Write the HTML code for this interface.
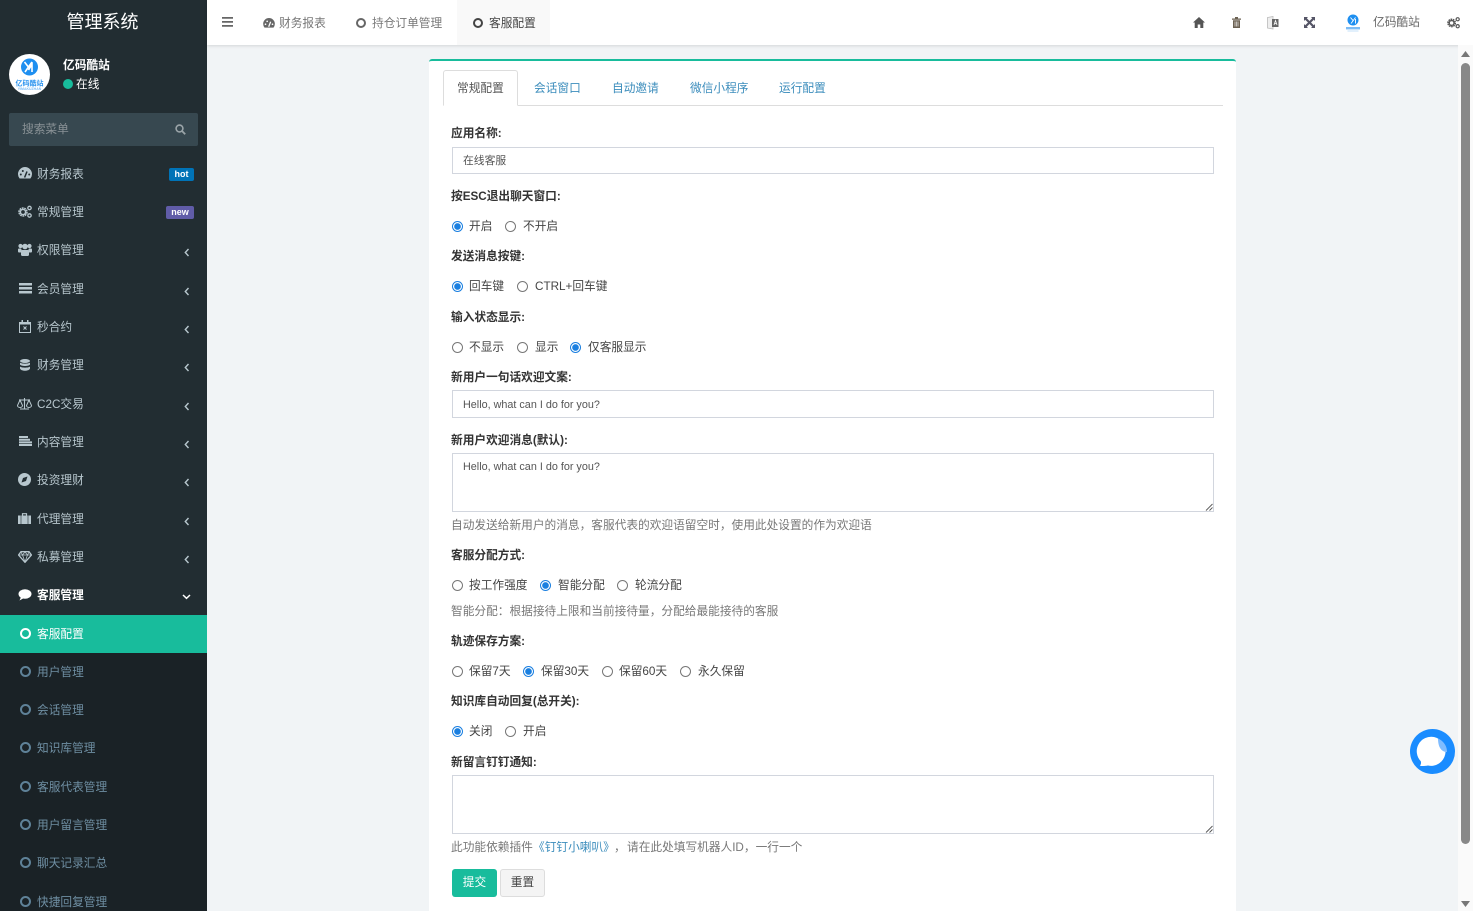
<!DOCTYPE html>
<html lang="zh"><head><meta charset="utf-8"><title>管理系统</title>
<style>
*{box-sizing:border-box}
html,body{margin:0;padding:0;width:1473px;height:911px;overflow:hidden;background:#f1f4f6}
body{position:relative;font-family:"Liberation Sans","Noto Sans CJK SC",sans-serif;font-size:11.7px;color:#444}
.a{position:absolute;white-space:nowrap}
.t{position:absolute;white-space:nowrap;line-height:16px;height:16px;margin-top:1px}
.m{color:#b8c7ce;left:37px}
.s{color:#6f8fa3;left:37px}
.b{font-weight:bold;color:#333;left:451px}
.h{color:#777;left:451px}
.r{position:absolute;width:11px;height:11px;margin-top:.5px;border-radius:50%;border:1px solid #777;background:#fff}
.r.on{border:1px solid #1a7fe0;background:radial-gradient(circle,#1a7fe0 0 3px,#fff 3.6px)}
.box{position:absolute;left:452px;width:762px;border:1px solid #d2d6de;background:#fff}
.in{font-size:10.8px;color:#555}
.ci{position:absolute;left:20px;width:11px;height:11px;border-radius:50%;border:2px solid #5f8298}
svg{position:absolute;display:block}
.chev{position:absolute;left:184px}
</style></head><body>

<!-- sidebar -->
<div class="a" style="left:0;top:0;width:207px;height:911px;background:#222d32"></div>
<div class="a" style="left:-1px;top:0;width:207px;height:45px;color:#fff;font-size:18px;line-height:44px;text-align:center">管理系统</div>

<svg style="left:9px;top:54px" width="41" height="41" viewBox="0 0 41 41"><circle cx="20.500" cy="20.500" r="20.500" fill="#fff"/><circle cx="20.500" cy="13" r="8.500" fill="#1e8ff0"/><path d="M15.500 8l3.500 4.500M23 8L16 18M23 18V10.500L19.500 16" stroke="#fff" stroke-width="1.600" fill="none"/><text x="20.500" y="31.500" text-anchor="middle" font-size="7" font-weight="bold" fill="#2a93ef" font-family="Noto Sans CJK SC,sans-serif">亿码酷站</text><text x="20.500" y="36" text-anchor="middle" font-size="3.500" font-weight="bold" fill="#7cbcf5" font-family="Liberation Sans,sans-serif">YIMAKUZHAN</text></svg>
<div class="t" style="left:63px;top:57px;color:#fff;font-weight:bold">亿码酷站</div>
<div class="a" style="left:63px;top:79px;width:10px;height:10px;border-radius:50%;background:#18bc9c"></div>
<div class="t" style="left:76px;top:76px;color:#fff">在线</div>

<div class="a" style="left:9px;top:113px;width:189px;height:33px;background:#374850;border-radius:2px"></div>
<div class="t" style="left:22px;top:121px;color:#8a9296">搜索菜单</div>
<svg style="left:175px;top:124px" width="11" height="11" viewBox="0 0 11 11"><circle cx="4.500" cy="4.500" r="3.400" fill="none" stroke="#9aa4a8" stroke-width="1.600"/><path d="M7 7l3.200 3.200" stroke="#9aa4a8" stroke-width="1.800"/></svg>

<!-- menu items -->
<svg style="left:18px;top:167px" width="14" height="12" viewBox="0 0 14 12"><path d="M1.600 11.500A7 7 0 1 1 12.400 11.500Z" fill="#b8c7ce"/><path d="M6.600 10.500L9 4.500" stroke="#222d32" stroke-width="1.500"/><circle cx="2.800" cy="7.500" r="1" fill="#222d32"/><circle cx="4.800" cy="4" r="1" fill="#222d32"/><circle cx="11.200" cy="7.500" r="1" fill="#222d32"/></svg>
<div class="t m" style="top:166px">财务报表</div>
<div class="a" style="left:169px;top:168px;width:25px;height:13px;background:#0073b7;border-radius:2px;color:#fff;font-weight:bold;font-size:9px;line-height:12px;text-align:center">hot</div>

<svg style="left:18px;top:205px" width="14" height="13" viewBox="0 0 14 13"><circle cx="5" cy="7" r="4" fill="none" stroke="#b8c7ce" stroke-width="1.500" stroke-dasharray="1.800 .7"/><circle cx="5" cy="7" r="2.600" fill="none" stroke="#b8c7ce" stroke-width="1.500"/><circle cx="11.500" cy="3" r="1.700" fill="none" stroke="#b8c7ce" stroke-width="1.300"/><circle cx="11.500" cy="10.500" r="1.700" fill="none" stroke="#b8c7ce" stroke-width="1.300"/></svg>
<div class="t m" style="top:204px">常规管理</div>
<div class="a" style="left:166px;top:206px;width:28px;height:13px;background:#605ca8;border-radius:2px;color:#fff;font-weight:bold;font-size:9px;line-height:12px;text-align:center">new</div>

<svg style="left:18px;top:243px" width="14" height="13" viewBox="0 0 14 13"><circle cx="7" cy="3.500" r="2.800" fill="#b8c7ce"/><circle cx="2.500" cy="3" r="2.100" fill="#b8c7ce"/><circle cx="11.500" cy="3" r="2.100" fill="#b8c7ce"/><rect x="0" y="5.500" width="3.500" height="4" rx="1" fill="#b8c7ce"/><rect x="10.500" y="5.500" width="3.500" height="4" rx="1" fill="#b8c7ce"/><rect x="3" y="7" width="8" height="6" rx="1.200" fill="#b8c7ce"/></svg>
<div class="t m" style="top:242px">权限管理</div>

<svg style="left:19px;top:283px" width="13" height="11" viewBox="0 0 13 11"><path d="M0 0h13v2.500H0zM0 4h13v2.500H0zM0 8h13v2.500H0z" fill="#b8c7ce"/></svg>
<div class="t m" style="top:281px">会员管理</div>

<svg style="left:19px;top:320px" width="12" height="13" viewBox="0 0 12 13"><path d="M.5 2.500h11v10H.5z" fill="none" stroke="#b8c7ce"/><path d="M0 2h12v2.500H0zM2.500 0h1.500v3H2.500zM8 0h1.500v3H8z" fill="#b8c7ce"/><path d="M4.500 6.500l3 3M7.500 6.500l-3 3" stroke="#b8c7ce"/></svg>
<div class="t m" style="top:319px">秒合约</div>

<svg style="left:20px;top:359px" width="10" height="12" viewBox="0 0 10 12"><ellipse cx="5" cy="2" rx="5" ry="2" fill="#b8c7ce"/><path d="M0 3.500c1 1.500 9 1.500 10 0v2c-1 2-9 2-10 0zM0 7.500c1 1.500 9 1.500 10 0v2c-1 3-9 3-10 0z" fill="#b8c7ce"/></svg>
<div class="t m" style="top:357px">财务管理</div>

<svg style="left:17px;top:398px" width="15" height="12" viewBox="0 0 15 12"><path d="M7.500 0v11M3 11h9M2 2h11" stroke="#b8c7ce" stroke-width="1.100" fill="none"/><path d="M.5 7.500L3 2l2.500 5.500a2.500 2 0 0 1-5 0zM9.500 7.500L12 2l2.500 5.500a2.500 2 0 0 1-5 0z" fill="none" stroke="#b8c7ce"/></svg>
<div class="t m" style="top:396px">C2C交易</div>

<svg style="left:19px;top:436px" width="13" height="10" viewBox="0 0 13 10"><path d="M0 0h9v2H0zM0 2.700h11v2H0zM0 5.400h13v2H0zM0 8h13v2H0z" fill="#b8c7ce"/></svg>
<div class="t m" style="top:434px">内容管理</div>

<svg style="left:18px;top:473px" width="13" height="13" viewBox="0 0 13 13"><circle cx="6.500" cy="6.500" r="6.500" fill="#b8c7ce"/><path d="M3.500 9.500l1.500-4.500 4.500-1.500-1.500 4.500z" fill="#222d32"/></svg>
<div class="t m" style="top:472px">投资理财</div>

<svg style="left:18px;top:513px" width="13" height="11" viewBox="0 0 13 11"><path d="M0 2.500h13V11H0z" fill="#b8c7ce"/><path d="M4.500 2.500V.7h4v1.800" fill="none" stroke="#b8c7ce" stroke-width="1.200"/><path d="M3 2.500V11M10 2.500V11" stroke="#222d32" stroke-width=".6"/></svg>
<div class="t m" style="top:511px">代理管理</div>

<svg style="left:18px;top:551px" width="14" height="12" viewBox="0 0 14 12"><path d="M3 .7h8L13.500 4 7 11.300.5 4z" fill="none" stroke="#b8c7ce" stroke-width="1.300"/><path d="M.5 4h13M4.500 4L7 11l2.500-7M3 1l1.500 3L7 1l2.500 3L11 1" fill="none" stroke="#b8c7ce" stroke-width=".8"/></svg>
<div class="t m" style="top:549px">私募管理</div>

<svg style="left:18px;top:589px" width="14" height="12" viewBox="0 0 14 12"><ellipse cx="7" cy="5" rx="6.500" ry="4.700" fill="#fff"/><path d="M3 8L1.500 11.500 6 9z" fill="#fff"/></svg>
<div class="t" style="left:37px;top:587px;color:#fff;font-weight:bold">客服管理</div>

<!-- chevrons -->
<svg class="chev" style="top:248px" width="6" height="9" viewBox="0 0 6 9"><path d="M4.500 1L1.300 4.500 4.500 8" fill="none" stroke="#b8c7ce" stroke-width="1.400"/></svg>
<svg class="chev" style="top:287px" width="6" height="9" viewBox="0 0 6 9"><path d="M4.500 1L1.300 4.500 4.500 8" fill="none" stroke="#b8c7ce" stroke-width="1.400"/></svg>
<svg class="chev" style="top:325px" width="6" height="9" viewBox="0 0 6 9"><path d="M4.500 1L1.300 4.500 4.500 8" fill="none" stroke="#b8c7ce" stroke-width="1.400"/></svg>
<svg class="chev" style="top:363px" width="6" height="9" viewBox="0 0 6 9"><path d="M4.500 1L1.300 4.500 4.500 8" fill="none" stroke="#b8c7ce" stroke-width="1.400"/></svg>
<svg class="chev" style="top:402px" width="6" height="9" viewBox="0 0 6 9"><path d="M4.500 1L1.300 4.500 4.500 8" fill="none" stroke="#b8c7ce" stroke-width="1.400"/></svg>
<svg class="chev" style="top:440px" width="6" height="9" viewBox="0 0 6 9"><path d="M4.500 1L1.300 4.500 4.500 8" fill="none" stroke="#b8c7ce" stroke-width="1.400"/></svg>
<svg class="chev" style="top:478px" width="6" height="9" viewBox="0 0 6 9"><path d="M4.500 1L1.300 4.500 4.500 8" fill="none" stroke="#b8c7ce" stroke-width="1.400"/></svg>
<svg class="chev" style="top:517px" width="6" height="9" viewBox="0 0 6 9"><path d="M4.500 1L1.300 4.500 4.500 8" fill="none" stroke="#b8c7ce" stroke-width="1.400"/></svg>
<svg class="chev" style="top:555px" width="6" height="9" viewBox="0 0 6 9"><path d="M4.500 1L1.300 4.500 4.500 8" fill="none" stroke="#b8c7ce" stroke-width="1.400"/></svg>
<svg style="left:182px;top:594px" width="9" height="6" viewBox="0 0 9 6"><path d="M1 1l3.500 3.300L8 1" fill="none" stroke="#fff" stroke-width="1.500"/></svg>

<!-- submenu -->
<div class="a" style="left:0;top:615px;width:207px;height:296px;background:#1a2226"></div>
<div class="a" style="left:0;top:615px;width:207px;height:38px;background:#18bc9c"></div>
<div class="ci" style="top:628px;border-color:#fff"></div><div class="t" style="left:37px;top:626px;color:#fff">客服配置</div>
<div class="ci" style="top:666px"></div><div class="t s" style="top:664px">用户管理</div>
<div class="ci" style="top:704px"></div><div class="t s" style="top:702px">会话管理</div>
<div class="ci" style="top:742px"></div><div class="t s" style="top:740px">知识库管理</div>
<div class="ci" style="top:781px"></div><div class="t s" style="top:779px">客服代表管理</div>
<div class="ci" style="top:819px"></div><div class="t s" style="top:817px">用户留言管理</div>
<div class="ci" style="top:857px"></div><div class="t s" style="top:855px">聊天记录汇总</div>
<div class="ci" style="top:896px"></div><div class="t s" style="top:894px">快捷回复管理</div>

<!-- header -->
<div class="a" style="left:207px;top:0;width:1266px;height:45px;background:#fff;box-shadow:0 1px 3px rgba(0,0,0,.12)"></div>
<div class="a" style="left:457px;top:0;width:93px;height:45px;background:#f9f9f9"></div>
<svg style="left:222px;top:17px" width="11" height="10" viewBox="0 0 11 10"><path d="M0 0h11v1.800H0zM0 4h11v1.800H0zM0 8h11v1.800H0z" fill="#666"/></svg>
<svg style="left:263px;top:18px" width="12" height="10" viewBox="0 0 14 12"><path d="M1.600 11.500A7 7 0 1 1 12.400 11.500Z" fill="#666"/><path d="M6.600 10.500L9 4.500" stroke="#fff" stroke-width="1.500"/><circle cx="2.800" cy="7.500" r="1" fill="#fff"/><circle cx="4.800" cy="4" r="1" fill="#fff"/><circle cx="11.200" cy="7.500" r="1" fill="#fff"/></svg>
<div class="t" style="left:279px;top:15px;color:#777">财务报表</div>
<div class="a" style="left:356px;top:18px;width:10px;height:10px;border-radius:50%;border:2px solid #666"></div>
<div class="t" style="left:372px;top:15px;color:#777">持仓订单管理</div>
<div class="a" style="left:473px;top:18px;width:10px;height:10px;border-radius:50%;border:2px solid #444"></div>
<div class="t" style="left:489px;top:15px;color:#444">客服配置</div>

<svg style="left:1193px;top:17px" width="12" height="11" viewBox="0 0 12 11"><path d="M6 0L0 5.500h1.700V11h3V7.500h2.600V11h3V5.500H12z" fill="#555"/></svg>
<svg style="left:1232px;top:17px" width="9" height="11" viewBox="0 0 9 11"><path d="M0 1.500h9v1.300H0zM3 0h3v1.500H3zM1 3.300h7V11H1z" fill="#6b6152"/><path d="M3 4.500v5M4.500 4.500v5M6 4.500v5" stroke="#fff" stroke-width=".6"/></svg>
<svg style="left:1267px;top:16px" width="12" height="14" viewBox="0 0 12 14"><path d="M.5 1.500L6 .5v12.500L.5 12z" fill="#eee" stroke="#bbb" stroke-width=".8"/><path d="M5 3h6.500v8H5z" fill="#666"/><path d="M7 9l1.500-4.500L10 9M7.500 7.500h2" stroke="#fff" stroke-width=".8" fill="none"/></svg>
<svg style="left:1304px;top:17px" width="11" height="11" viewBox="0 0 11 11"><path d="M0 0h4L2.800 1.200 5.500 4 8.200 1.200 7 0h4v4L9.800 2.800 7 5.500l2.800 2.700L11 7v4H7l1.200-1.200L5.500 7 2.800 9.800 4 11H0V7l1.200 1.200L4 5.500 1.200 2.800 0 4z" fill="#556"/></svg>
<svg style="left:1344px;top:14px" width="18" height="20" viewBox="0 0 18 20"><circle cx="9" cy="6" r="5.500" fill="#1e8ff0"/><path d="M6.500 3.500L9 6.500M11.500 3.500L7 9.500M11.500 9.500V5" stroke="#fff" stroke-width=".9" fill="none"/><rect x="2" y="13" width="14" height="2.400" fill="#7cbcf5"/><rect x="3.500" y="16.500" width="11" height="1" fill="#c4e1fa"/></svg>
<div class="t" style="left:1373px;top:14px;color:#666">亿码酷站</div>
<svg style="left:1447px;top:16px" width="13" height="13" viewBox="0 0 14 13"><circle cx="5" cy="7" r="4" fill="none" stroke="#555" stroke-width="1.500" stroke-dasharray="1.800 .7"/><circle cx="5" cy="7" r="2.600" fill="none" stroke="#555" stroke-width="1.500"/><circle cx="11.500" cy="3" r="1.700" fill="none" stroke="#555" stroke-width="1.300"/><circle cx="11.500" cy="10.500" r="1.700" fill="none" stroke="#555" stroke-width="1.300"/></svg>

<!-- panel -->
<div class="a" style="left:429px;top:59px;width:807px;height:852px;background:#fff;border-top:2px solid #18bc9c;border-radius:3px 3px 0 0"></div>
<div class="a" style="left:443px;top:105px;width:780px;height:1px;background:#ddd"></div>
<div class="a" style="left:443px;top:70px;width:75px;height:36px;background:#fff;border:1px solid #ddd;border-bottom:1px solid #fff;border-radius:3px 3px 0 0"></div>
<div class="t" style="left:457px;top:80px;color:#555">常规配置</div>
<div class="t" style="left:534px;top:80px;color:#3c8dbc">会话窗口</div>
<div class="t" style="left:612px;top:80px;color:#3c8dbc">自动邀请</div>
<div class="t" style="left:690px;top:80px;color:#3c8dbc">微信小程序</div>
<div class="t" style="left:779px;top:80px;color:#3c8dbc">运行配置</div>

<!-- form -->
<div class="t b" style="top:125px">应用名称:</div>
<div class="box" style="top:147px;height:27px"></div>
<div class="t in" style="left:463px;top:152px">在线客服</div>

<div class="t b" style="top:188px">按ESC退出聊天窗口:</div>
<div class="r on" style="left:452px;top:220px"></div><div class="t" style="left:469px;top:218px">开启</div>
<div class="r" style="left:505px;top:220px"></div><div class="t" style="left:523px;top:218px">不开启</div>

<div class="t b" style="top:248px">发送消息按键:</div>
<div class="r on" style="left:452px;top:280px"></div><div class="t" style="left:469px;top:278px">回车键</div>
<div class="r" style="left:517px;top:280px"></div><div class="t" style="left:535px;top:278px">CTRL+回车键</div>

<div class="t b" style="top:309px">输入状态显示:</div>
<div class="r" style="left:452px;top:341px"></div><div class="t" style="left:469px;top:339px">不显示</div>
<div class="r" style="left:517px;top:341px"></div><div class="t" style="left:535px;top:339px">显示</div>
<div class="r on" style="left:570px;top:341px"></div><div class="t" style="left:588px;top:339px">仅客服显示</div>

<div class="t b" style="top:369px">新用户一句话欢迎文案:</div>
<div class="box" style="top:390px;height:28px"></div>
<div class="t in" style="left:463px;top:396px">Hello, what can I do for you?</div>

<div class="t b" style="top:432px">新用户欢迎消息(默认):</div>
<div class="box" style="top:453px;height:59px"></div>
<div class="t in" style="left:463px;top:458px">Hello, what can I do for you?</div>
<svg style="left:1205px;top:503px" width="8" height="8" viewBox="0 0 8 8"><path d="M1 7.500L7.500 1M4.500 7.500l3-3" stroke="#555" stroke-width=".9"/></svg>
<div class="t h" style="top:517px">自动发送给新用户的消息，客服代表的欢迎语留空时，使用此处设置的作为欢迎语</div>

<div class="t b" style="top:547px">客服分配方式:</div>
<div class="r" style="left:452px;top:579px"></div><div class="t" style="left:469px;top:577px">按工作强度</div>
<div class="r on" style="left:540px;top:579px"></div><div class="t" style="left:558px;top:577px">智能分配</div>
<div class="r" style="left:617px;top:579px"></div><div class="t" style="left:635px;top:577px">轮流分配</div>
<div class="t h" style="top:603px">智能分配：根据接待上限和当前接待量，分配给最能接待的客服</div>

<div class="t b" style="top:633px">轨迹保存方案:</div>
<div class="r" style="left:452px;top:665px"></div><div class="t" style="left:469px;top:663px">保留7天</div>
<div class="r on" style="left:523px;top:665px"></div><div class="t" style="left:541px;top:663px">保留30天</div>
<div class="r" style="left:602px;top:665px"></div><div class="t" style="left:619px;top:663px">保留60天</div>
<div class="r" style="left:680px;top:665px"></div><div class="t" style="left:698px;top:663px">永久保留</div>

<div class="t b" style="top:693px">知识库自动回复(总开关):</div>
<div class="r on" style="left:452px;top:725px"></div><div class="t" style="left:469px;top:723px">关闭</div>
<div class="r" style="left:505px;top:725px"></div><div class="t" style="left:523px;top:723px">开启</div>

<div class="t b" style="top:754px">新留言钉钉通知:</div>
<div class="box" style="top:775px;height:59px"></div>
<svg style="left:1205px;top:825px" width="8" height="8" viewBox="0 0 8 8"><path d="M1 7.500L7.500 1M4.500 7.500l3-3" stroke="#555" stroke-width=".9"/></svg>
<div class="t h" style="top:839px">此功能依赖插件</div>
<div class="t" style="left:533px;top:839px;color:#3c8dbc">《钉钉小喇叭》</div>
<div class="t h" style="left:614px;top:839px">，</div>
<div class="t h" style="left:627px;top:839px">请在此处填写机器人ID，一行一个</div>

<div class="a" style="left:452px;top:869px;width:45px;height:28px;background:#18bc9c;border-radius:3px;color:#fff;line-height:27px;text-align:center">提交</div>
<div class="a" style="left:500px;top:869px;width:45px;height:28px;background:#f4f4f4;border:1px solid #ddd;border-radius:3px;color:#444;line-height:25px;text-align:center">重置</div>

<!-- chat bubble -->
<svg style="left:1410px;top:729px" width="45" height="45" viewBox="0 0 45 45"><circle cx="22.500" cy="22.500" r="22.500" fill="#1a8cff"/><path d="M24 8a14.500 14.500 0 1 1-6 28.500c-3 .5-6 .8-8 .3 1-1.500 1.300-3 .8-4.500A14.500 14.500 0 0 1 24 8z" fill="#fff"/><path d="M28 9.500a14.500 14.500 0 0 1 9 13.500c-5 0-9-4-9-13.500z" fill="#7fbcff"/></svg>

<!-- scrollbar -->
<div class="a" style="left:1458px;top:45px;width:15px;height:866px;background:#fafafa"></div>
<div class="a" style="left:1461px;top:63px;width:9px;height:781px;background:#888;border-radius:5px"></div>
<svg style="left:1461px;top:50px" width="9" height="8" viewBox="0 0 9 8"><path d="M4.500 1L9 7H0z" fill="#777"/></svg>
<svg style="left:1461px;top:900px" width="9" height="8" viewBox="0 0 9 8"><path d="M4.500 7L9 1H0z" fill="#777"/></svg>
</body></html>
